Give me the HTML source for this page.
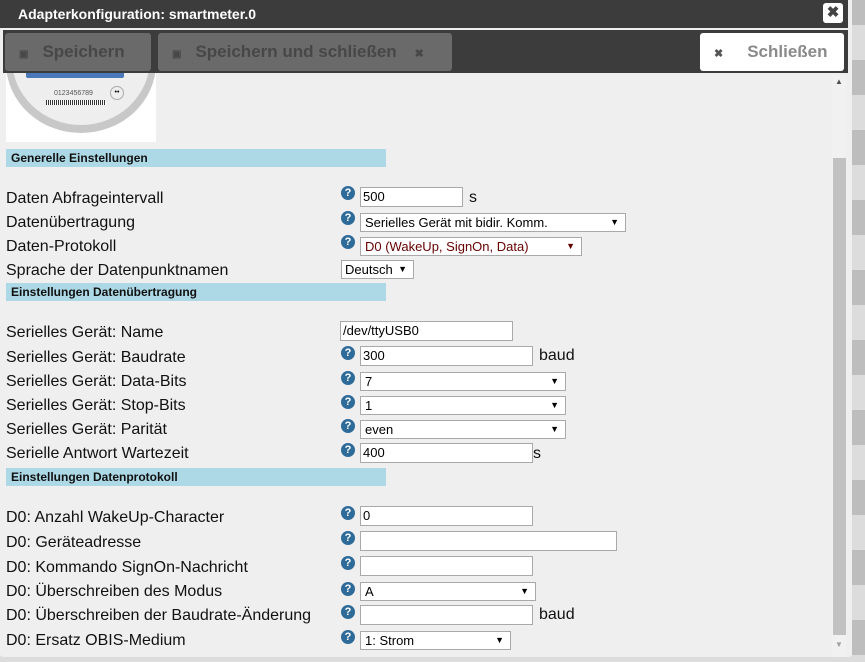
<!DOCTYPE html>
<html><head><meta charset="utf-8"><style>
*{margin:0;padding:0;box-sizing:border-box}
body{width:865px;height:662px;overflow:hidden;background:#dcdcdc;font-family:"Liberation Sans",sans-serif;position:relative}
.a{position:absolute}
.band{position:absolute;left:852px;width:13px;height:35px;background:#bdbdbd}
.lbl{position:absolute;left:6px;font-size:16px;color:#111;line-height:20px;white-space:nowrap;margin-top:2px}
.h{position:absolute;left:6px;width:380px;height:18px;background:#add8e6;font-size:12px;font-weight:bold;color:#111;padding-left:5px;line-height:18px}
.q{position:absolute;left:341px;width:14px;height:14px;border-radius:50%;background:#2e6b99;color:#fff;font-size:11px;font-weight:bold;text-align:center;line-height:14px}
.in{position:absolute;background:#fff;border:1px solid #a9a9a9;height:20px;font-size:13px;line-height:18px;padding-left:2px;color:#000}
.sel{position:absolute;background:#fff;border:1px solid #a9a9a9;height:19px;font-size:13px;line-height:17px;padding-left:4px;color:#000}
.sel:after{content:"▼";position:absolute;right:6px;top:0;font-size:9px}
.u{position:absolute;font-size:16px;line-height:20px;color:#111;margin-top:1px}
</style></head><body>
<div class="band" style="top:-10px"></div><div class="band" style="top:60px"></div><div class="band" style="top:130px"></div><div class="band" style="top:200px"></div><div class="band" style="top:270px"></div><div class="band" style="top:340px"></div><div class="band" style="top:410px"></div><div class="band" style="top:480px"></div><div class="band" style="top:550px"></div><div class="band" style="top:620px"></div>
<div class="a" style="left:0;top:0;width:852px;height:657px;background:#efefef;border-radius:0 0 3px 3px"></div>
<div class="a" style="left:0;top:0;width:848px;height:28px;background:#3c3c3c"></div>
<div class="a" style="left:18px;top:6px;color:#fff;font-weight:bold;font-size:14px">Adapterkonfiguration: smartmeter.0</div>
<div class="a" style="left:823px;top:3px;width:20px;height:20px;background:#fff;border-radius:3px;text-align:center;font-size:15px;font-weight:bold;color:#444;line-height:20px">✖</div>
<div class="a" style="left:3px;top:30px;width:845px;height:43px;background:#3c3c3c"></div>
<div class="a" style="left:5px;top:33px;width:146px;height:38px;background:#6a6a6a;border-radius:3px;color:#474747;font-weight:bold;font-size:17px;line-height:37px"><span style="font-size:10px;margin:0 14px 0 14px">▣</span>Speichern</div>
<div class="a" style="left:158px;top:33px;width:294px;height:38px;background:#6a6a6a;border-radius:3px;color:#474747;font-weight:bold;font-size:17px;line-height:37px"><span style="font-size:10px;margin:0 14px 0 14px">▣</span>Speichern und schließen<span style="font-size:11px;margin-left:18px">✖</span></div>
<div class="a" style="left:700px;top:33px;width:144px;height:38px;background:#fff;border-radius:3px;color:#8a8a8a;font-weight:bold;font-size:17px;line-height:37px"><span style="font-size:11px;margin:0 24px 0 14px;color:#555">✖</span>Schließen</div>
<!-- meter image -->
<div class="a" style="left:6px;top:73px;width:150px;height:69px;background:#fff;overflow:hidden">
<div class="a" style="left:0px;top:-80px;width:150px;height:140px;border-radius:50%;background:#c8c8c8"></div>
<div class="a" style="left:6px;top:-80px;width:138px;height:132px;border-radius:50%;background:#eeeeee"></div>
<div class="a" style="left:20px;top:-4px;width:98px;height:9px;background:#4a78b8;border-radius:2px"></div>
<div class="a" style="left:48px;top:17px;font-size:7px;color:#555">0123456789</div>
<div class="a" style="left:40px;top:27px;width:60px;height:5px;background:repeating-linear-gradient(90deg,#333 0 1px,#fff 1px 2px)"></div>
<div class="a" style="left:104px;top:13px;width:14px;height:14px;border-radius:50%;border:1px solid #aaa;font-size:7px;text-align:center;line-height:12px">••</div>
</div>
<!-- scrollbar -->
<div class="a" style="left:832px;top:75px;width:14px;height:582px;background:#f1f1f1"></div>
<div class="a" style="left:833px;top:158px;width:13px;height:477px;background:#c1c1c1"></div>
<div class="a" style="left:835px;top:77px;font-size:8px;color:#505050">▲</div>
<div class="a" style="left:835px;top:640px;font-size:8px;color:#a0a0a0">▼</div>

<div class="h" style="top:149px">Generelle Einstellungen</div>
<div class="lbl" style="top:187px">Daten Abfrageintervall</div>
<div class="q" style="top:186px">?</div><div class="in" style="left:360px;top:187px;width:103px">500</div><div class="u" style="left:469px;top:187px">s</div>
<div class="lbl" style="top:211px">Datenübertragung</div>
<div class="q" style="top:211px">?</div><div class="sel" style="left:360px;top:213px;width:266px">Serielles Gerät mit bidir. Komm.</div>
<div class="lbl" style="top:235px">Daten-Protokoll</div>
<div class="q" style="top:235px">?</div><div class="sel" style="left:360px;top:237px;width:222px;color:#600">D0 (WakeUp, SignOn, Data)</div>
<div class="lbl" style="top:259px">Sprache der Datenpunktnamen</div>
<div class="sel" style="left:341px;top:260px;width:73px;padding-left:3px">Deutsch</div>

<div class="h" style="top:283px">Einstellungen Datenübertragung</div>
<div class="lbl" style="top:321px">Serielles Gerät: Name</div>
<div class="in" style="left:340px;top:321px;width:173px">/dev/ttyUSB0</div>
<div class="lbl" style="top:346px">Serielles Gerät: Baudrate</div>
<div class="q" style="top:346px">?</div><div class="in" style="left:360px;top:346px;width:173px">300</div><div class="u" style="left:539px;top:345px">baud</div>
<div class="lbl" style="top:370px">Serielles Gerät: Data-Bits</div>
<div class="q" style="top:371px">?</div><div class="sel" style="left:360px;top:372px;width:206px">7</div>
<div class="lbl" style="top:394px">Serielles Gerät: Stop-Bits</div>
<div class="q" style="top:395px">?</div><div class="sel" style="left:360px;top:396px;width:206px">1</div>
<div class="lbl" style="top:418px">Serielles Gerät: Parität</div>
<div class="q" style="top:419px">?</div><div class="sel" style="left:360px;top:420px;width:206px">even</div>
<div class="lbl" style="top:442px">Serielle Antwort Wartezeit</div>
<div class="q" style="top:443px">?</div><div class="in" style="left:360px;top:443px;width:173px">400</div><div class="u" style="left:533px;top:443px">s</div>

<div class="h" style="top:468px">Einstellungen Datenprotokoll</div>
<div class="lbl" style="top:506px">D0: Anzahl WakeUp-Character</div>
<div class="q" style="top:506px">?</div><div class="in" style="left:360px;top:506px;width:173px">0</div>
<div class="lbl" style="top:531px">D0: Geräteadresse</div>
<div class="q" style="top:531px">?</div><div class="in" style="left:360px;top:531px;width:257px"></div>
<div class="lbl" style="top:556px">D0: Kommando SignOn-Nachricht</div>
<div class="q" style="top:556px">?</div><div class="in" style="left:360px;top:556px;width:173px"></div>
<div class="lbl" style="top:580px">D0: Überschreiben des Modus</div>
<div class="q" style="top:582px">?</div><div class="sel" style="left:360px;top:582px;width:176px">A</div>
<div class="lbl" style="top:604px">D0: Überschreiben der Baudrate-Änderung</div>
<div class="q" style="top:605px">?</div><div class="in" style="left:360px;top:605px;width:173px"></div><div class="u" style="left:539px;top:604px">baud</div>
<div class="lbl" style="top:629px">D0: Ersatz OBIS-Medium</div>
<div class="q" style="top:630px">?</div><div class="sel" style="left:360px;top:631px;width:151px">1: Strom</div>
</body></html>
